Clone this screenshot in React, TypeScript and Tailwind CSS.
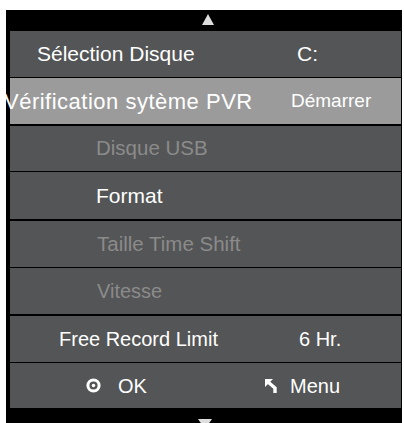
import React from 'react';

type Row = {
  label: string;
  value?: string;
  h: string;
  sep: string;
  labelCls: string;
  valueCls?: string;
  dim?: boolean;
  active?: boolean;
};

const rows: Row[] = [
  { label: 'Sélection Disque', value: 'C:', h: 'h-[47px]', sep: 'border-b', labelCls: 'pl-[27px] w-[287px] text-[21px]', valueCls: 'text-[21px]' },
  { label: 'Vérification sytème PVR', value: 'Démarrer', h: 'h-[48px]', sep: 'border-b-2', labelCls: '-ml-[6px] w-[287px] text-[22px] tracking-[0.5px]', valueCls: 'text-[19px]', active: true },
  { label: 'Disque USB', h: 'h-[46px]', sep: 'border-b', labelCls: 'pl-[86px] text-[20.5px]', dim: true },
  { label: 'Format', h: 'h-[49px]', sep: 'border-b-2', labelCls: 'pl-[86px] text-[21px]' },
  { label: 'Taille Time Shift', h: 'h-[47px]', sep: 'border-b', labelCls: 'pl-[87px] text-[20.5px]', dim: true },
  { label: 'Vitesse', h: 'h-[48px]', sep: 'border-b-2', labelCls: 'pl-[87px] text-[20px]', dim: true },
  { label: 'Free Record Limit', value: '6 Hr.', h: 'h-[47px]', sep: 'border-b', labelCls: 'pl-[49px] w-[289px] text-[20px]', valueCls: 'text-[20px]' },
];

function OkIcon() {
  return (
    <svg width="15" height="15" viewBox="0 0 15 15">
      <circle cx="7.5" cy="7.5" r="5.6" fill="none" stroke="#ffffff" strokeWidth="3" />
      <circle cx="7.5" cy="7.5" r="1.8" fill="#ffffff" />
    </svg>
  );
}

function BackIcon() {
  return (
    <svg width="14" height="14" viewBox="0 0 14 14">
      <path d="M0 0 L8 0 L0 8 Z" fill="#ffffff" />
      <path d="M3 3 L10 9 L10 14" fill="none" stroke="#ffffff" strokeWidth="3.4" />
    </svg>
  );
}

export default function App() {
  return (
    <div className="w-[404px] h-[423px] bg-white pt-[10px] overflow-hidden" style={{ fontFamily: '"Liberation Sans", Arial, sans-serif' }}>
      <div className="ml-[6px] w-[396px] h-[413px] bg-black flex flex-col">
        <div className="h-[21px] shrink-0 flex justify-center pt-[4px]">
          <div className="w-0 h-0 border-l-[6px] border-r-[6px] border-b-[11px] border-l-transparent border-r-transparent border-b-[#dedede] ml-[8px]" />
        </div>
        <div className="ml-[4px] mr-[1px] shrink-0 bg-[#545556] flex flex-col">
          {rows.map((r) => (
            <div
              key={r.label}
              className={`${r.h} ${r.sep} border-black flex items-center whitespace-nowrap ${r.active ? 'bg-[#9b9b9b]' : ''} ${r.dim ? 'text-[#8b8b8b]' : 'text-white'}`}
            >
              <div className={`${r.labelCls} shrink-0`}>{r.label}</div>
              {r.value && <div className={r.valueCls ?? ''}>{r.value}</div>}
            </div>
          ))}
          <div className="h-[45px] flex items-center text-white text-[20px]">
            <div className="pl-[76px] w-[255px] flex items-center gap-[17px]">
              <OkIcon />
              <span>OK</span>
            </div>
            <div className="flex items-center gap-[11px]">
              <BackIcon />
              <span>Menu</span>
            </div>
          </div>
        </div>
        <div className="flex-1 flex justify-center pt-[11px]">
          <div className="w-0 h-0 border-l-[7px] border-r-[7px] border-t-[10px] border-l-transparent border-r-transparent border-t-[#dedede] ml-[2px]" />
        </div>
      </div>
    </div>
  );
}
